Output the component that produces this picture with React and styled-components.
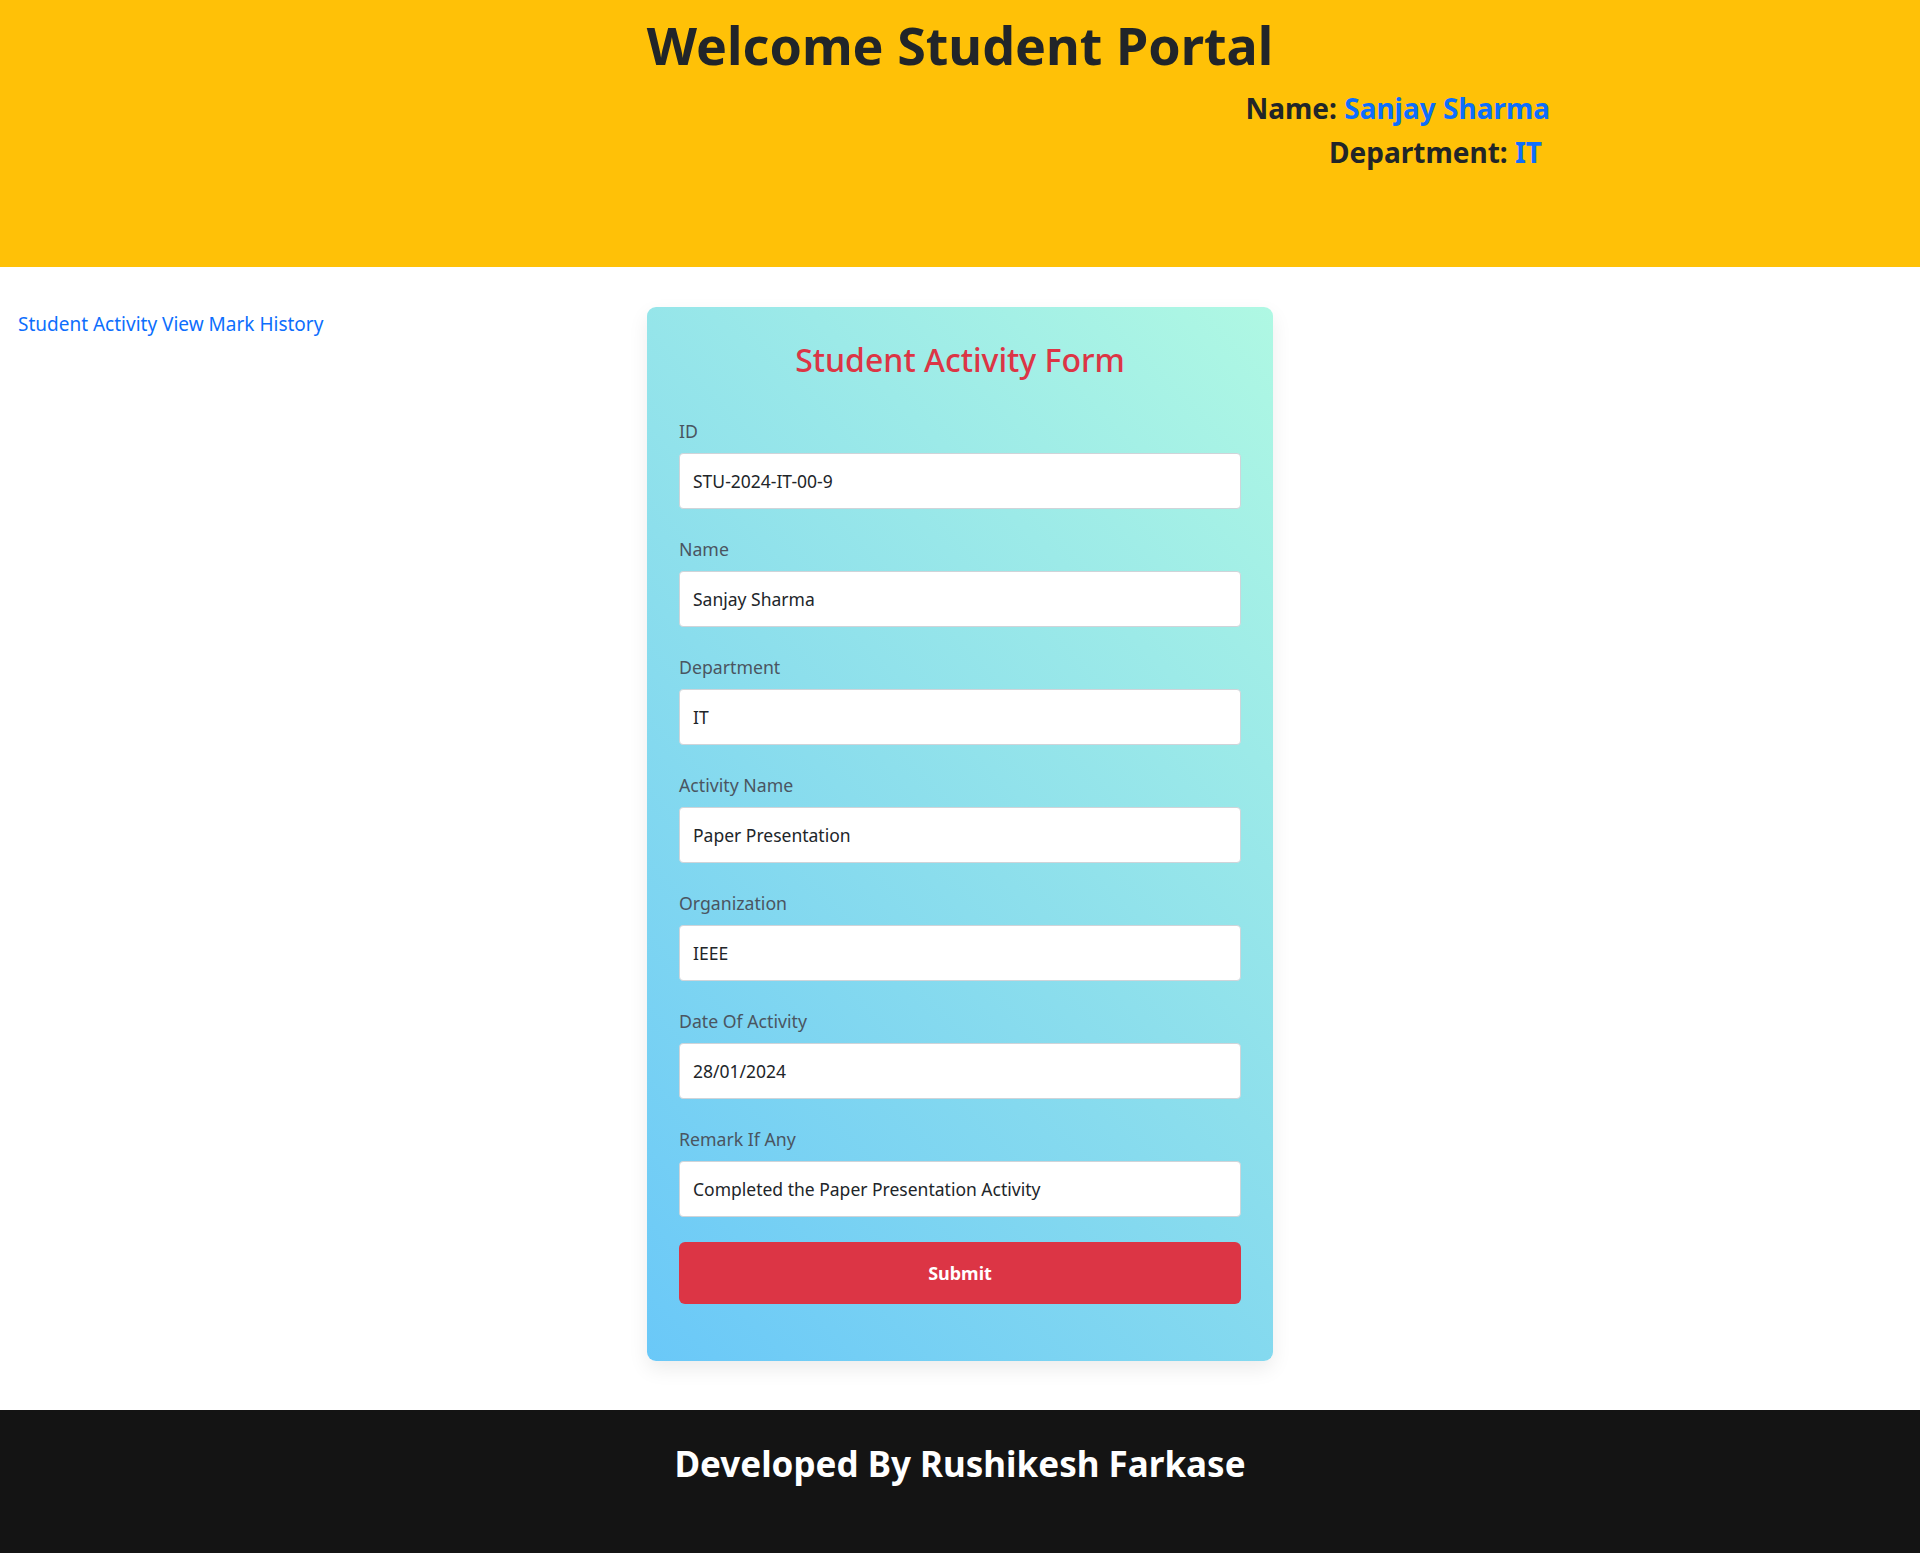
import React from 'react';
import styled, { createGlobalStyle } from 'styled-components';

const GlobalStyle = createGlobalStyle`
  * { box-sizing: border-box; }
  body {
    margin: 0;
    font-family: "Noto Sans", "Open Sans", sans-serif;
    color: #212529;
    background: #fff;
  }
`;

const Header = styled.header`
  background: #ffc107;
  height: 267px;
  padding-top: 11px;
  display: flex;
  flex-direction: column;
`;

const Title = styled.h1`
  margin: 0 0 12px;
  text-align: center;
  font-size: 52px;
  line-height: 67px;
  font-weight: 700;
  color: #212529;
`;

const InfoList = styled.div`
  display: flex;
  flex-direction: column;
  align-items: flex-end;
  padding-right: 370px;
  gap: 8px;
`;

const InfoLine = styled.h3`
  margin: 0;
  margin-right: ${(p) => p.$shift || 0}px;
  font-size: 28px;
  line-height: 36px;
  font-weight: 700;
  color: #212529;

  span {
    color: #0d6efd;
  }
`;

const Main = styled.main`
  display: grid;
  grid-template-columns: 1fr 626px 1fr;
  padding: 40px 0 49px;
  align-items: start;
`;

const SideNav = styled.nav`
  padding: 3px 0 0 18px;
  font-size: 19px;
  line-height: 28px;

  a {
    color: #0d6efd;
    text-decoration: none;
  }
`;

const Card = styled.form`
  background: linear-gradient(45deg, #6ac8f8 0%, #8ddfec 50%, #aff8e3 100%);
  border-radius: 9px;
  padding: 32px 32px 57px;
  box-shadow: 0 8px 20px rgba(0, 0, 0, 0.08);
`;

const FormTitle = styled.h2`
  margin: 0 0 37px;
  text-align: center;
  color: #dc3545;
  font-size: 32px;
  line-height: 42px;
  font-weight: 500;
`;

const Field = styled.div`
  margin-bottom: 27px;

  &:last-of-type {
    margin-bottom: 25px;
  }
`;

const Label = styled.label`
  display: block;
  margin-bottom: 8px;
  font-size: 17.7px;
  line-height: 27px;
  color: #4a5561;
`;

const Input = styled.input`
  display: block;
  width: 100%;
  height: 56px;
  padding: 0 13px;
  border: 1px solid #cfd4d9;
  border-radius: 4px;
  background: #fff;
  font-family: inherit;
  font-size: 17.5px;
  color: #212529;
  outline: none;
`;

const SubmitButton = styled.button`
  display: block;
  width: 100%;
  height: 62px;
  border: none;
  border-radius: 6px;
  background: #dc3545;
  color: #fff;
  font-family: inherit;
  font-size: 18px;
  font-weight: 700;
  cursor: pointer;
`;

const Footer = styled.footer`
  background: #141414;
  height: 144px;
  padding-top: 32px;
  text-align: center;
`;

const FooterText = styled.h2`
  margin: 0;
  color: #fff;
  font-size: 35px;
  line-height: 44px;
  font-weight: 700;
`;

const fields = [
  { label: 'ID', value: 'STU-2024-IT-00-9' },
  { label: 'Name', value: 'Sanjay Sharma' },
  { label: 'Department', value: 'IT' },
  { label: 'Activity Name', value: 'Paper Presentation' },
  { label: 'Organization', value: 'IEEE' },
  { label: 'Date Of Activity', value: '28/01/2024' },
  { label: 'Remark If Any', value: 'Completed the Paper Presentation Activity' },
];

export default function App() {
  return (
    <>
      <GlobalStyle />
      <Header>
        <Title>Welcome Student Portal</Title>
        <InfoList>
          <InfoLine>
            Name: <span>Sanjay Sharma</span>
          </InfoLine>
          <InfoLine $shift={8}>
            Department: <span>IT</span>
          </InfoLine>
        </InfoList>
      </Header>

      <Main>
        <SideNav>
          <a href="#activity">Student Activity</a> <a href="#history">View Mark History</a>
        </SideNav>

        <Card onSubmit={(e) => e.preventDefault()}>
          <FormTitle>Student Activity Form</FormTitle>
          {fields.map((f) => (
            <Field key={f.label}>
              <Label>{f.label}</Label>
              <Input defaultValue={f.value} />
            </Field>
          ))}
          <SubmitButton type="submit">Submit</SubmitButton>
        </Card>
        <div />
      </Main>

      <Footer>
        <FooterText>Developed By Rushikesh Farkase</FooterText>
      </Footer>
    </>
  );
}
